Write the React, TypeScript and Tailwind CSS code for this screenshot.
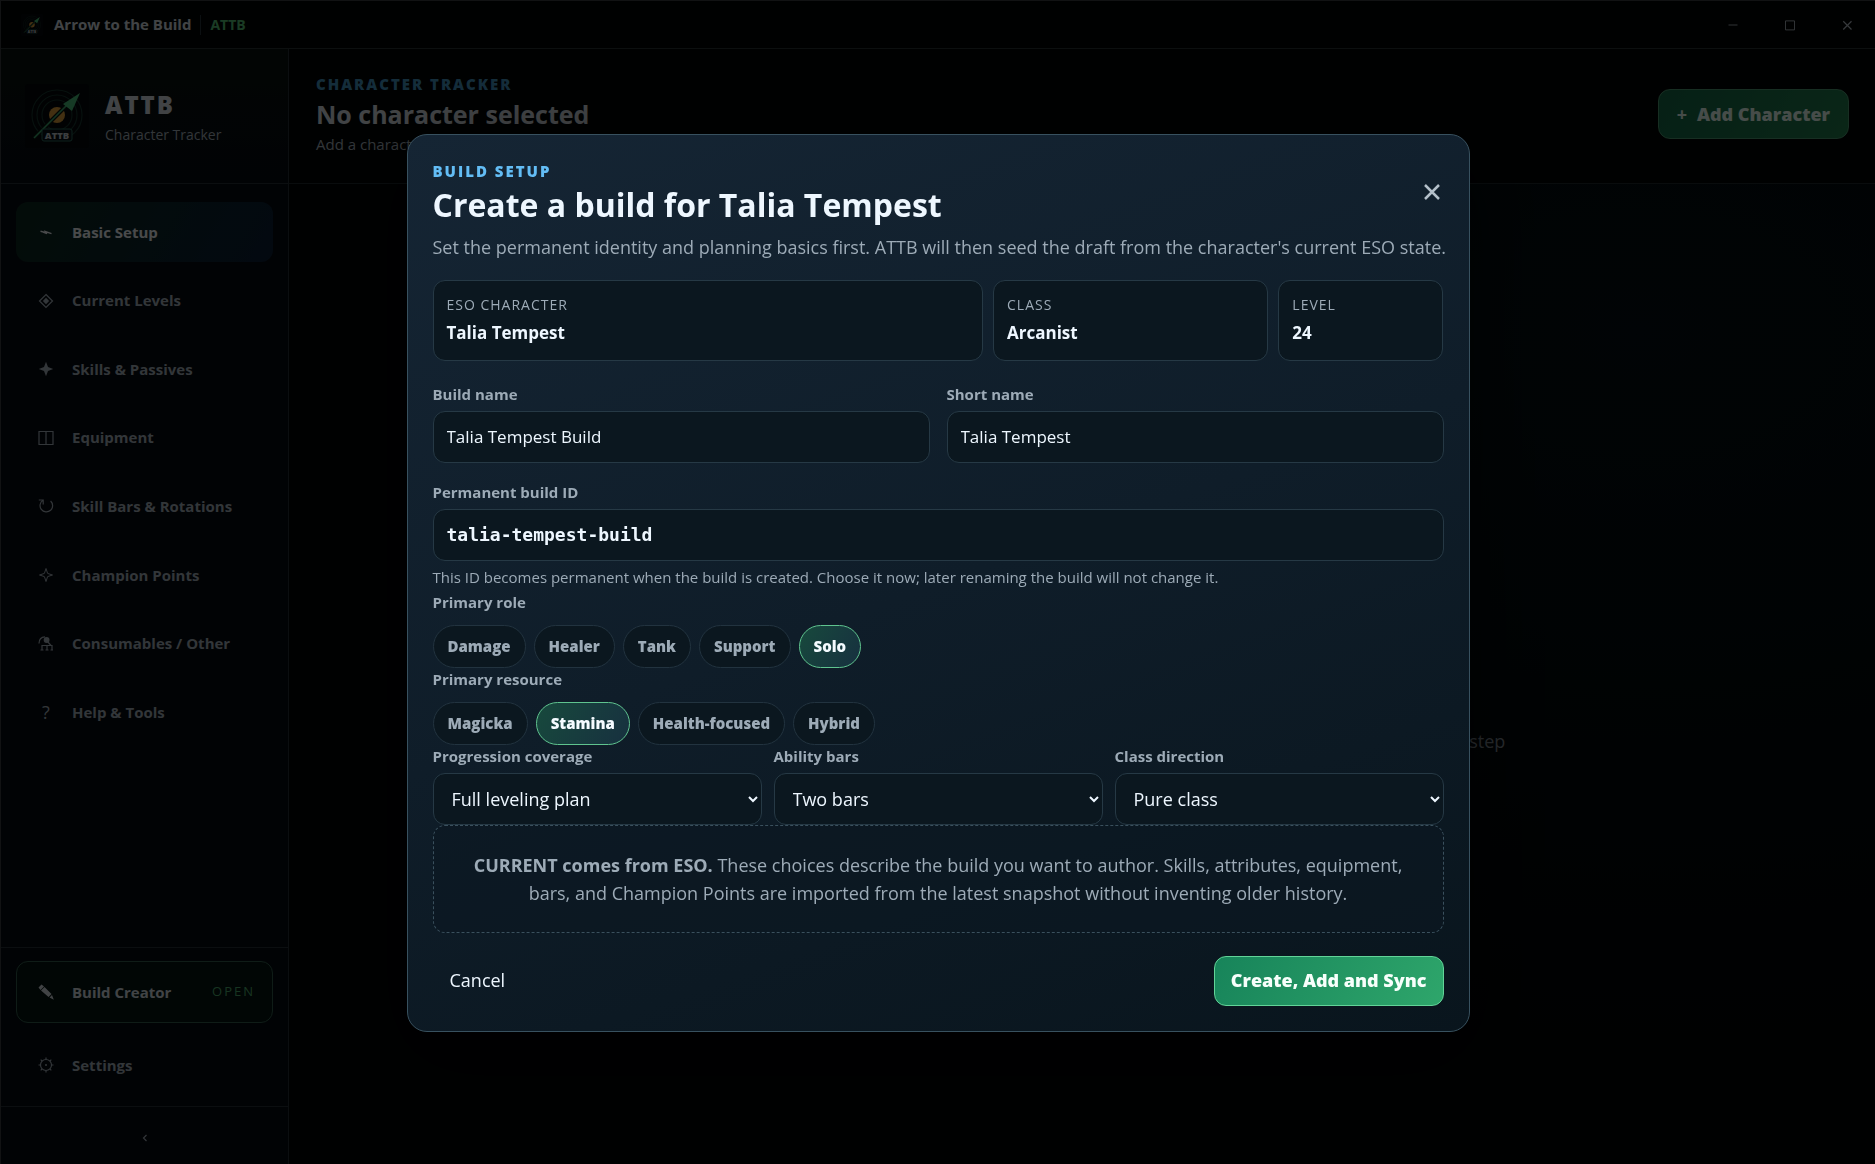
import { useState, type ReactNode } from 'react';

interface NavItem {
  label: string;
  icon: ReactNode;
}

function Icon({ children, className = 'size-4' }: { children: ReactNode; className?: string }) {
  return (
    <svg
      viewBox="0 0 16 16"
      className={className}
      fill="none"
      stroke="currentColor"
      strokeWidth="1.2"
      aria-hidden="true"
    >
      {children}
    </svg>
  );
}

const NAV_ITEMS: NavItem[] = [
  {
    label: 'Basic Setup',
    icon: <Icon><path d="M2.5 7.2 8 8.6 7.4 7.6 13.5 9.6M5 8.2l4 1.4" strokeWidth="1.4" /></Icon>,
  },
  {
    label: 'Current Levels',
    icon: (
      <Icon>
        <path d="M8 1.5 14.5 8 8 14.5 1.5 8Z" />
        <path d="M8 4.8 11.2 8 8 11.2 4.8 8Z" fill="currentColor" stroke="none" />
      </Icon>
    ),
  },
  {
    label: 'Skills & Passives',
    icon: (
      <Icon>
        <path d="M8 .8 10 6l5.2 2L10 10l-2 5.2L6 10 .8 8 6 6Z" fill="currentColor" stroke="none" />
      </Icon>
    ),
  },
  {
    label: 'Equipment',
    icon: <Icon><path d="M1 1.5h14v13H1ZM8 1.5v13" /></Icon>,
  },
  {
    label: 'Skill Bars & Rotations',
    icon: <Icon><path d="M.8 2h4.4v4.4M5 2.3A6.3 6.3 0 1 0 12.6 3" /></Icon>,
  },
  {
    label: 'Champion Points',
    icon: <Icon><path d="M8 1.5 9.6 6.4 14.5 8 9.6 9.6 8 14.5 6.4 9.6 1.5 8 6.4 6.4Z" strokeWidth="1" /></Icon>,
  },
  {
    label: 'Consumables / Other',
    icon: (
      <Icon>
        <path d="M1 8.5C1 4 3 2 7 1.8" />
        <circle cx="8.6" cy="5" r="2.9" fill="currentColor" stroke="none" />
        <path d="M9.5 6.5 13 10.5M4 15v-4.5h10V15M9 10.5V15M2.5 15h3M7.5 15h3M12.5 15H15" />
      </Icon>
    ),
  },
  {
    label: 'Help & Tools',
    icon: <span className="text-[18px] leading-5">?</span>,
  },
];

const ROLES = ['Damage', 'Healer', 'Tank', 'Support', 'Solo'];
const RESOURCES = ['Magicka', 'Stamina', 'Health-focused', 'Hybrid'];

const FIELD =
  'mt-[7px] h-[52px] w-full rounded-xl border border-[#263945] bg-[#0b171f] text-[#eef7ff] outline-none focus:border-[#5fc48f]';
const LABEL = 'block text-[15px] leading-5 font-bold text-[#9dabb7]';

function Logo({ className }: { className: string }) {
  return (
    <svg viewBox="0 0 64 64" className={className} aria-hidden="true">
      <rect width="64" height="64" rx="3" fill="#04080a" />
      <g fill="none" stroke="#17362f" strokeWidth="1.2">
        <circle cx="32" cy="31" r="25" />
        <circle cx="32" cy="31" r="20" />
        <circle cx="32" cy="31" r="15" />
      </g>
      <circle cx="32" cy="31" r="8" fill="#e0a03c" />
      <path d="M9 54 44 19" stroke="#0a1410" strokeWidth="4" />
      <path d="M9 54 44 19" stroke="#3fae70" strokeWidth="1.6" />
      <path d="M55 9 38 20 47 27Z" fill="#4cc47c" />
      <rect x="17" y="45" width="30" height="12" rx="2" fill="#081016" stroke="#2c6d5c" />
      <text
        x="32"
        y="54.5"
        textAnchor="middle"
        fontFamily="Open Sans, sans-serif"
        fontSize="9.5"
        fontWeight="800"
        fill="#c6cdd2"
      >
        ATTB
      </text>
    </svg>
  );
}

function TitleBar() {
  return (
    <header className="flex h-12 items-center justify-between border-b border-[#2a3234] bg-[#030506] pl-5">
      <div className="flex items-center">
        <Logo className="size-[22px]" />
        <span className="ml-[11px] text-[15px] font-bold text-[#dbe2e8]">Arrow to the Build</span>
        <span className="mx-[9px] h-5 w-px bg-[#26323a]" />
        <span className="text-sm font-bold text-[#59c77a]">ATTB</span>
      </div>
      <div className="flex text-[#b4bec6]">
        <button type="button" aria-label="Minimize" className="grid h-12 w-[57px] place-items-center">
          <Icon className="size-3"><path d="M2 8h12" /></Icon>
        </button>
        <button type="button" aria-label="Maximize" className="grid h-12 w-[57px] place-items-center">
          <Icon className="size-3"><path d="M2 2.5h12v12H2Z" /></Icon>
        </button>
        <button type="button" aria-label="Close window" className="grid h-12 w-[57px] place-items-center">
          <Icon className="size-3"><path d="m3 3 11 11M14 3 3 14" strokeWidth="1.6" /></Icon>
        </button>
      </div>
    </header>
  );
}

function Sidebar() {
  return (
    <aside className="flex w-72 shrink-0 flex-col border-r border-[#263036] bg-[#060b12]">
      <div className="flex h-[135px] items-center gap-4 border-b border-[#263036] bg-linear-to-b from-[#08130f] to-[#060b12] pl-6">
        <Logo className="size-16" />
        <div className="pt-[5px]">
          <p className="text-2xl leading-8 font-extrabold tracking-[2px] text-[#dbe2e8]">ATTB</p>
          <p className="text-sm leading-7 text-[#a8b4be]">Character Tracker</p>
        </div>
      </div>

      <nav className="flex-1 px-[15px] pt-[18px]">
        <div className="flex h-[540px] flex-col justify-between">
          {NAV_ITEMS.map((item, i) => (
            <button
              key={item.label}
              type="button"
              className={
                i === 0
                  ? 'flex h-[60px] items-center rounded-xl bg-linear-120 from-[#0c2a1e] to-[#0a2038] pl-[22px] text-left text-[15px] font-bold text-[#f4f8fb]'
                  : 'flex h-[60px] items-center rounded-xl pl-[22px] text-left text-[15px] font-bold text-[#a8b4be]'
              }
            >
              <span className="mr-[18px] grid w-4 place-items-center font-normal">{item.icon}</span>
              {item.label}
            </button>
          ))}
        </div>
      </nav>

      <div className="flex flex-col gap-3 border-t border-[#263036] px-[15px] pt-[13px] pb-[11px]">
        <button
          type="button"
          className="flex h-[62px] items-center rounded-xl border border-[#33604f] bg-[#041412] pr-[17px] pl-[21px] text-[15px] font-bold text-[#dbe2e8]"
        >
          <Icon className="mr-[18px] size-4">
            <path
              d="M.5 3.5 3.5.5 6 2.5 2.500 6ZM3 6.500 6.500 3 13.500 10 10.500 13ZM11.500 13.500l2.500-2.500L15.800 15.800Z"
              fill="currentColor"
              stroke="none"
            />
          </Icon>
          Build Creator
          <span className="ml-auto text-[13px] font-normal tracking-[2px] text-[#4fb070]">OPEN</span>
        </button>
        <button
          type="button"
          className="flex h-[60px] items-center rounded-xl pl-[22px] text-[15px] font-bold text-[#a8b4be]"
        >
          <Icon className="mr-[18px] size-4">
            <circle cx="8" cy="8" r="5.5" />
            <circle cx="8" cy="8" r="1" fill="currentColor" stroke="none" />
            <path d="M8 .5v2M8 13.5v2M.5 8h2M13.5 8h2M2.7 2.7l1.4 1.4M11.9 11.9l1.4 1.4M13.3 2.7l-1.4 1.4M4.1 11.9l-1.4 1.4" />
          </Icon>
          Settings
        </button>
      </div>
      <button
        type="button"
        aria-label="Collapse sidebar"
        className="grid h-[58px] place-items-center border-t border-[#263036] pt-1 text-[#a8b4be]"
      >
        <Icon className="size-3"><path d="M10 4 6 8l4 4" strokeWidth="1.6" /></Icon>
      </button>
    </aside>
  );
}

function Tracker() {
  return (
    <main className="flex min-w-0 flex-1 flex-col bg-[#020406]">
      <div className="flex h-[135px] items-center justify-between border-b border-[#1f2a2e] pr-[26px] pb-1 pl-[27px]">
        <div>
          <p className="text-[15px] leading-5 font-extrabold tracking-[2px] text-[#4597c4]">CHARACTER TRACKER</p>
          <h1 className="text-[25px] leading-10 font-bold text-[#dbe2e8]">No character selected</h1>
          <p className="text-[15px] leading-5 text-[#a8b4be]">Add a character to start tracking a build</p>
        </div>
        <button
          type="button"
          className="flex h-[50px] items-center gap-[10px] rounded-xl border border-[#4e9a72] bg-linear-120 from-[#146b49] to-[#23804f] px-[18px] text-[18px] font-extrabold text-[#eafff4]"
        >
          <span className="font-bold">+</span> Add Character
        </button>
      </div>
      <div className="flex flex-1 items-center justify-center bg-[radial-gradient(ellipse_at_85%_15%,#041014,#020406_60%)] px-8 pt-[134px] text-center">
        <p className="text-[18px] leading-7 text-[#8b969f]">
          Add a character, choose the build that it should follow, and ATTB will guide you through the next step
        </p>
      </div>
    </main>
  );
}

function ChipGroup({ label, options, initial }: { label: string; options: string[]; initial: string }) {
  const [value, setValue] = useState(initial);

  return (
    <div role="group" aria-label={label}>
      <p className={LABEL}>{label}</p>
      <div className="mt-[13px] flex flex-wrap gap-2">
        {options.map((option) => (
          <button
            key={option}
            type="button"
            aria-pressed={option === value}
            onClick={() => setValue(option)}
            className={
              option === value
                ? 'h-[43px] rounded-full border border-[#5fc48f] bg-linear-120 from-[#17493c] to-[#17303f] px-[14px] text-[15px] font-extrabold text-[#f4fbff]'
                : 'h-[43px] rounded-full border border-[#22333f] bg-[#0b171f] px-[14px] text-[15px] font-extrabold text-[#9dabb7]'
            }
          >
            {option}
          </button>
        ))}
      </div>
    </div>
  );
}

function InfoCard({ label, value }: { label: string; value: string }) {
  return (
    <div className="flex flex-col gap-1 rounded-xl border border-[#263945] bg-[#0b171f] px-[13px] pt-[14px] pb-[13px]">
      <span className="text-sm leading-5 tracking-[1px] text-[#9dabb7]">{label}</span>
      <strong className="text-[17px] leading-7 font-bold text-[#eef7ff]">{value}</strong>
    </div>
  );
}

function SelectField({ id, label, options }: { id: string; label: string; options: string[] }) {
  return (
    <div>
      <label htmlFor={id} className={LABEL}>{label}</label>
      <select id={id} className={`${FIELD} px-[14px] text-[18px]`}>
        {options.map((option) => (
          <option key={option}>{option}</option>
        ))}
      </select>
    </div>
  );
}

function BuildSetupDialog() {
  const [name, setName] = useState('Talia Tempest Build');
  const [shortName, setShortName] = useState('Talia Tempest');
  const [buildId, setBuildId] = useState('talia-tempest-build');

  return (
    <section
      role="dialog"
      aria-modal="true"
      aria-labelledby="build-setup-title"
      className="w-full max-w-[1063px] rounded-[20px] border border-[#38515f] bg-linear-160 from-[#152534] via-[#0f1d29] to-[#09151d] p-[25px] shadow-[0_24px_80px_rgba(0,0,0,0.6)]"
    >
      <div className="flex items-start justify-between">
        <div>
          <p className="text-[15px] leading-[22px] font-extrabold tracking-[2px] text-[#63bdf5]">BUILD SETUP</p>
          <h2 id="build-setup-title" className="text-[32px] leading-[46px] font-bold text-[#eef7ff]">
            Create a build for Talia Tempest
          </h2>
        </div>
        <button type="button" aria-label="Close" className="mt-5 grid size-6 place-items-center text-[#b4c0ca]">
          <Icon className="size-4"><path d="m1 1 14 14M15 1 1 15" strokeWidth="2.5" /></Icon>
        </button>
      </div>
      <p className="mt-[5px] text-[18px] leading-7 text-[#9dabb7] lg:whitespace-nowrap">
        Set the permanent identity and planning basics first. ATTB will then seed the draft from the character's
        current ESO state.
      </p>

      <div className="mt-[19px] grid grid-cols-[10fr_5fr_3fr] gap-[10px]">
        <InfoCard label="ESO CHARACTER" value="Talia Tempest" />
        <InfoCard label="CLASS" value="Arcanist" />
        <InfoCard label="LEVEL" value="24" />
      </div>

      <div className="mt-[23px] grid grid-cols-2 gap-[17px]">
        <div>
          <label htmlFor="build-name" className={LABEL}>Build name</label>
          <input
            id="build-name"
            value={name}
            onChange={(e) => setName(e.target.value)}
            className={`${FIELD} px-[13px] text-[17px]`}
          />
        </div>
        <div>
          <label htmlFor="short-name" className={LABEL}>Short name</label>
          <input
            id="short-name"
            value={shortName}
            onChange={(e) => setShortName(e.target.value)}
            className={`${FIELD} px-[13px] text-[17px]`}
          />
        </div>
      </div>

      <div className="mt-[19px]">
        <label htmlFor="build-id" className={LABEL}>Permanent build ID</label>
        <input
          id="build-id"
          value={buildId}
          onChange={(e) => setBuildId(e.target.value)}
          className={`${FIELD} px-[13px] font-['DejaVu_Sans_Mono',monospace] text-[18px] font-bold`}
        />
        <p className="mt-[6px] mb-[5px] text-[15px] leading-5 text-[#9dabb7]">
          This ID becomes permanent when the build is created. Choose it now; later renaming the build will not
          change it.
        </p>
      </div>

      <div className="flex flex-col gap-px">
        <ChipGroup label="Primary role" options={ROLES} initial="Solo" />
        <ChipGroup label="Primary resource" options={RESOURCES} initial="Stamina" />

        <div className="grid grid-cols-3 gap-3">
          <SelectField id="coverage" label="Progression coverage" options={['Full leveling plan', 'Endgame only']} />
          <SelectField id="bars" label="Ability bars" options={['Two bars', 'One bar']} />
          <SelectField id="direction" label="Class direction" options={['Pure class', 'Subclassed']} />
        </div>
      </div>

      <p className="rounded-xl border border-dashed border-[#3a505d] bg-[#0b1821]/60 p-[25px] text-center text-[18px] leading-7 text-[#9dabb7]">
        <strong className="font-bold">CURRENT comes from ESO.</strong> These choices describe the build you want to
        author. Skills, attributes, equipment, bars, and Champion Points are imported from the latest snapshot
        without inventing older history.
      </p>

      <div className="mt-[23px] flex items-center justify-between">
        <button type="button" className="h-[50px] px-[17px] text-[18px] text-[#eef7ff]">Cancel</button>
        <button
          type="button"
          className="h-[50px] rounded-xl border border-[#62d498] bg-linear-120 from-[#17845a] to-[#2ea66b] px-4 text-[18px] font-extrabold text-[#f7fffb]"
        >
          Create, Add and Sync
        </button>
      </div>
    </section>
  );
}

export default function App() {
  return (
    <div className="flex min-h-screen flex-col border-t border-l border-[#3a3f40] bg-black font-['Open_Sans',sans-serif]">
      <TitleBar />
      <div className="flex flex-1">
        <Sidebar />
        <Tracker />
      </div>
      <div className="fixed inset-0 grid place-items-center overflow-y-auto border-t border-l border-transparent bg-black/70 px-6">
        <BuildSetupDialog />
      </div>
    </div>
  );
}
